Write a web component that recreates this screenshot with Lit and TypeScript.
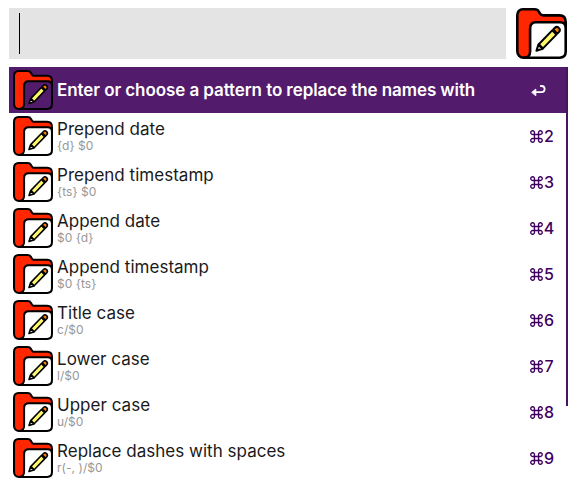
import { LitElement, html, css } from "lit";
import { customElement, property } from "lit/decorators.js";

@customElement("folder-icon")
class FolderIcon extends LitElement {
  @property({ type: Boolean, reflect: true }) clear = false;

  static styles = css`
    :host { display: block; }
    svg { display: block; width: 100%; height: 100%; }
    .line { stroke: #000; stroke-width: 2.6; stroke-linejoin: round; stroke-linecap: round; }
    .red { fill: #ff2600; }
    .paper { fill: #fff; }
    :host([clear]) .paper { fill: #521b6c; }
    .wood { fill: #d6d6d6; }
    .body { fill: #fff76b; }
    .rubber { fill: #ff8000; }
    .thin { stroke-width: 2; }
  `;

  render() {
    return html`<svg viewBox="0 0 51 51">
      <path class="line red" d="M8 49.7C3.8 49.7 1.3 47 1.3 43V7.2C1.3 3.5 3.5 1.3 7 1.3H18.5C20.8 1.3 22 2 23 3.8L24 5.6C24.8 7 25.6 7.4 27.5 7.4H43.5C47.5 7.4 49.7 10 49.7 14V30L14 49Z"/>
      <path class="line paper" d="M8 49.7C11.8 49.7 14.1 47.4 14.1 43.5V20.5C14.1 16.6 16.4 14.3 20 14.3H44C47.6 14.3 49.7 16.5 49.7 20V43.5C49.7 47.4 47.4 49.7 43.5 49.7Z"/>
      <g class="line thin">
        <path class="wood" d="M20.4 42.8L22.4 36.6L26.6 40.8Z"/>
        <path class="body" d="M22.8 36.2L36.2 22.4L40.4 26.6L27 40.4Z"/>
        <path class="rubber" d="M37.2 21.4L38.9 19.7C41.4 17.3 45.4 21.2 43.1 23.9L41.4 25.6Z"/>
      </g>
    </svg>`;
  }
}

@customElement("result-row")
class ResultRow extends LitElement {
  @property() name = "";
  @property() detail = "";
  @property() key = "";
  @property({ type: Boolean, reflect: true }) selected = false;

  static styles = css`
    :host {
      display: flex; align-items: center; height: 46px; box-sizing: border-box;
      padding: 0 14px 0 4px; color: #1a1a1a;
    }
    :host([selected]) { background: #521b6c; color: #fff; }
    folder-icon { width: 40px; height: 40px; flex: none; }
    .text { flex: 1; margin-left: 4px; white-space: nowrap; }
    .name { font-size: 17px; line-height: 20px; letter-spacing: 0.02px; }
    :host([selected]) .name { font-weight: 600; letter-spacing: -0.08px; }
    .detail { font-size: 12px; line-height: 14px; color: #979797; letter-spacing: 0.05px; }
    .key { display: flex; align-items: center; font-size: 16px; font-weight: 500; color: #400060; }
    .digit { width: 10px; text-align: center; display: flex; justify-content: center; }
    .cmd { width: 13px; height: 13px; margin-right: 1px; fill: none; stroke: currentColor; stroke-width: 1.5; }
    .enter { width: 15px; height: 12px; margin-right: 8px; fill: none; stroke: #fff; stroke-width: 1.8; stroke-linecap: round; stroke-linejoin: round; }
    .tip { fill: #fff; stroke-width: 1; }
  `;

  render() {
    return html`
      <folder-icon ?clear=${this.selected}></folder-icon>
      <div class="text">
        <div class="name">${this.name}</div>
        ${this.detail ? html`<div class="detail">${this.detail}</div>` : ""}
      </div>
      ${this.selected
        ? html`<svg class="enter" viewBox="0 0 15 12"><path d="M3 8.2H10.5C14.7 8.2 14.7 2 10.5 2H9.8"/><path class="tip" d="M1 8.2L4.8 5.1V11.3Z"/></svg>`
        : html`<div class="key"><svg class="cmd" viewBox="0 0 14 14"><path d="M4.8 4.8V3A2 2 0 1 0 2.8 4.8H11.2A2 2 0 1 0 9.2 3V11A2 2 0 1 0 11.2 9.2H2.8A2 2 0 1 0 4.8 11Z"/></svg><span class="digit">${this.key}</span></div>`}
    `;
  }
}

const ROWS = [
  ["Enter or choose a pattern to replace the names with", "", ""],
  ["Prepend date", "{d} $0", "2"],
  ["Prepend timestamp", "{ts} $0", "3"],
  ["Append date", "$0 {d}", "4"],
  ["Append timestamp", "$0 {ts}", "5"],
  ["Title case", "c/$0", "6"],
  ["Lower case", "l/$0", "7"],
  ["Upper case", "u/$0", "8"],
  ["Replace dashes with spaces", "r(-, )/$0", "9"],
];

@customElement("app-root")
class AppRoot extends LitElement {
  static styles = css`
    :host {
      display: block; box-sizing: border-box; height: 489px; padding: 8px 9px 0;
      background: #fff; font-family: Inter, "Liberation Sans", sans-serif; overflow: hidden;
    }
    .top { display: flex; gap: 10px; margin-bottom: 8px; }
    .search { width: 497px; height: 51px; box-sizing: border-box; padding: 5px 10px; background: #e4e4e4; }
    .caret { width: 1px; height: 41px; background: #000; }
    folder-icon { width: 51px; height: 51px; }
    .list { position: relative; width: 559px; }
    .scroll { position: absolute; top: 0; right: 0; width: 2px; height: 339px; background: #45165c; }
  `;

  render() {
    return html`
      <div class="top">
        <div class="search"><div class="caret"></div></div>
        <folder-icon></folder-icon>
      </div>
      <div class="list">
        ${ROWS.map(([name, detail, key], i) => html`
          <result-row .name=${name} .detail=${detail} .key=${key} ?selected=${i === 0}></result-row>`)}
        <div class="scroll"></div>
      </div>
    `;
  }
}
